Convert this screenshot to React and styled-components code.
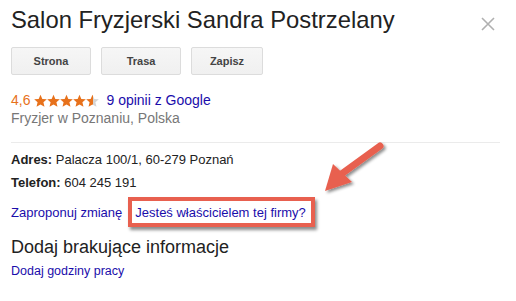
import React from "react";
import styled, { createGlobalStyle } from "styled-components";

const GlobalStyle = createGlobalStyle`
  body {
    margin: 0;
    background: #fff;
    font-family: "Liberation Sans", Arial, sans-serif;
  }
`;

const Card = styled.div`
  position: relative;
  width: 516px;
  height: 301px;
  padding: 0 11px;
  box-sizing: border-box;
  overflow: hidden;
  color: #222;
`;

const Header = styled.div`
  display: flex;
  justify-content: space-between;
  align-items: flex-start;
  padding-top: 5px;
`;

const Title = styled.h1`
  margin: 0;
  font-size: 23.8px;
  font-weight: normal;
  line-height: 30px;
  color: #222;
`;

const Close = styled.span`
  margin: 11px 9px 0 0;
  width: 16px;
  height: 16px;
  svg {
    display: block;
  }
`;

const Actions = styled.div`
  display: flex;
  gap: 10px;
  margin-top: 12px;
`;

const ActionButton = styled.button`
  width: ${p => p.width || 80}px;
  height: 28px;
  border: 1px solid #dcdcdc;
  border-radius: 2px;
  background: linear-gradient(#f6f6f6, #f0f0f0);
  font-family: inherit;
  font-size: 11px;
  font-weight: bold;
  color: #444;
  padding: 0;
`;

const Rating = styled.div`
  display: flex;
  align-items: center;
  gap: 4px;
  margin-top: 17px;
  font-size: 14px;
  line-height: 17px;
`;

const Score = styled.span`
  color: #e7711b;
`;

const Stars = styled.span`
  display: flex;
  margin-right: 3px;
  svg {
    display: block;
  }
`;

const Link = styled.a`
  color: #1a0dab;
  text-decoration: none;
  font-size: ${p => p.size || 14}px;
`;

const Category = styled.div`
  color: #777;
  font-size: 14px;
  line-height: 17px;
  margin-top: 1px;
`;

const Divider = styled.hr`
  border: 0;
  border-top: 1px solid #ebebeb;
  margin: 15px 5px 0 0;
`;

const Info = styled.div`
  font-size: 13px;
  line-height: 16px;
  margin-top: ${p => p.top}px;
  color: #222;
  b {
    font-weight: bold;
  }
`;

const LinksRow = styled.div`
  display: flex;
  align-items: center;
  gap: 6px;
  margin-top: 6px;
  font-size: 13px;
`;

const Highlight = styled.span`
  display: inline-flex;
  align-items: center;
  height: 22px;
  padding: 0 5px 0 3px;
  border: 4px solid #e8604f;
  background: #fff;
  box-shadow: 2px 3px 3px rgba(0, 0, 0, 0.45);
`;

const Section = styled.h2`
  margin: 9px 0 0;
  font-size: 18px;
  font-weight: normal;
  line-height: 22px;
  color: #222;
`;

const SubLink = styled(Link)`
  display: block;
  margin-top: 6px;
`;

const Arrow = styled.svg`
  position: absolute;
  left: 318px;
  top: 139px;
  overflow: visible;
`;

const Star = ({ half }) => (
  <svg width="13" height="14" viewBox="0 0 24 24">
    <defs>
      <linearGradient id="half">
        <stop offset="55%" stopColor="#e7711b" />
        <stop offset="55%" stopColor="#d5d5d5" />
      </linearGradient>
    </defs>
    <path
      d="M12 0.5l3.4 7.6 8.3.8-6.3 5.5 1.9 8.1L12 18.3l-7.3 4.2 1.9-8.1L0.3 8.9l8.3-.8z"
      fill={half ? "url(#half)" : "#e7711b"}
    />
  </svg>
);

const App = () => (
  <>
    <GlobalStyle />
    <Card>
      <Header>
        <Title>Salon Fryzjerski Sandra Postrzelany</Title>
        <Close>
          <svg width="16" height="16" viewBox="0 0 16 16">
            <path d="M2 2l12 12M14 2L2 14" stroke="#b0b0b0" strokeWidth="1.6" />
          </svg>
        </Close>
      </Header>
      <Actions>
        <ActionButton>Strona</ActionButton>
        <ActionButton>Trasa</ActionButton>
        <ActionButton width={72}>Zapisz</ActionButton>
      </Actions>
      <Rating>
        <Score>4,6</Score>
        <Stars>
          <Star />
          <Star />
          <Star />
          <Star />
          <Star half />
        </Stars>
        <Link>9 opinii z Google</Link>
      </Rating>
      <Category>Fryzjer w Poznaniu, Polska</Category>
      <Divider />
      <Info top={9}>
        <b>Adres:</b> Palacza 100/1, 60-279 Poznań
      </Info>
      <Info top={7}>
        <b>Telefon:</b> 604 245 191
      </Info>
      <LinksRow>
        <Link size={13}>Zaproponuj zmianę</Link>
        <Highlight>
          <Link size={13}>Jesteś właścicielem tej firmy?</Link>
        </Highlight>
      </LinksRow>
      <Section>Dodaj brakujące informacje</Section>
      <SubLink size={12.5}>Dodaj godziny pracy</SubLink>
      <Arrow width="70" height="60">
        <defs>
          <filter id="sh" x="-30%" y="-30%" width="160%" height="160%">
            <feDropShadow dx="2" dy="2" stdDeviation="1.5" floodColor="#000" floodOpacity="0.45" />
          </filter>
        </defs>
        <g filter="url(#sh)">
          <path d="M62 7L22 36" stroke="#e8604f" strokeWidth="7" strokeLinecap="round" />
          <path d="M7 52L15 25L34 43Z" fill="#e8604f" />
        </g>
      </Arrow>
    </Card>
  </>
);

export default App;
